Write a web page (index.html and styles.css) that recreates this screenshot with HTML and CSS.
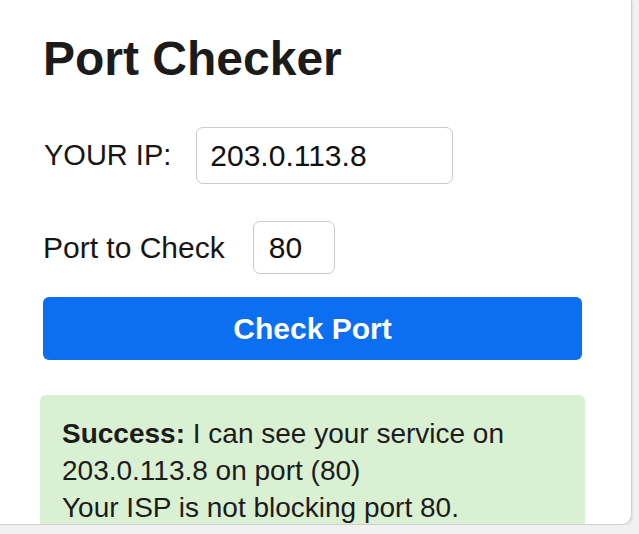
FILE: index.html
```html
<!doctype html>
<html lang="en">
<head>
  <meta charset="UTF-8">
  <title>Port Checker</title>
  <link rel="stylesheet" href="styles.css">
</head>
<body>
  <div class="card">
    <h1 class="title">Port Checker</h1>
    <div class="row row-ip">
      <label class="label" for="ip">YOUR IP:</label>
      <input class="field field-ip" id="ip" type="text" value="203.0.113.8">
    </div>
    <div class="row row-port">
      <label class="label" for="port">Port to Check</label>
      <input class="field field-port" id="port" type="text" value="80">
    </div>
    <button class="btn" type="button">Check Port</button>
    <div class="alert">
      <b>Success:</b> I can see your service on<br>
      203.0.113.8 on port (80)<br>
      Your ISP is not blocking port 80.
    </div>
  </div>
</body>
</html>
```

FILE: styles.css
```css
body {
    margin: 0;
    background: #f1f1f1;
    font-family: "Liberation Sans", Arial, sans-serif;
    color: #161616;
}

.card {
    width: 588px;
    height: 492px;
    padding: 32px 0 0 43px;
    background: #fff;
    border-right: 1px solid #cfcfcf;
    border-bottom: 1px solid #cfcfcf;
    border-bottom-right-radius: 10px;
    overflow: hidden;
    box-shadow: 1px 1px 3px rgba(0, 0, 0, 0.08);
}

.title {
    margin: 0 0 41px 0;
    font-size: 48px;
    line-height: 54px;
    font-weight: bold;
    color: #1b1b1b;
}

.row {
    display: flex;
    align-items: center;
}

.row-ip {
    gap: 25px;
    margin-bottom: 37px;
    padding-left: 1px;
}

.row-ip .label {
    font-size: 29px;
}

.row-port {
    gap: 28px;
    margin-bottom: 23px;
}

.label {
    font-size: 30px;
}

.field {
    box-sizing: border-box;
    border: 1px solid #cccccc;
    border-radius: 7px;
    font-family: inherit;
    font-size: 30px;
    color: #111;
    background: #fff;
    outline: none;
}

.field-ip {
    width: 257px;
    height: 57px;
    padding: 0 0 0 13px;
}

.field-port {
    width: 82px;
    height: 53px;
    padding: 0 0 0 15px;
}

.btn {
    display: block;
    width: 539px;
    height: 63px;
    margin-bottom: 35px;
    border: none;
    border-radius: 6px;
    background: #0c6ef0;
    color: #fff;
    font-family: inherit;
    font-size: 30px;
    font-weight: bold;
}

.alert {
    width: 523px;
    margin-left: -3px;
    padding: 20px 0 40px 22px;
    background: #d9f0d3;
    border-radius: 6px;
    font-size: 28px;
    line-height: 37px;
    color: #1c1c1c;
}

.alert b {
    font-weight: bold;
}
```
